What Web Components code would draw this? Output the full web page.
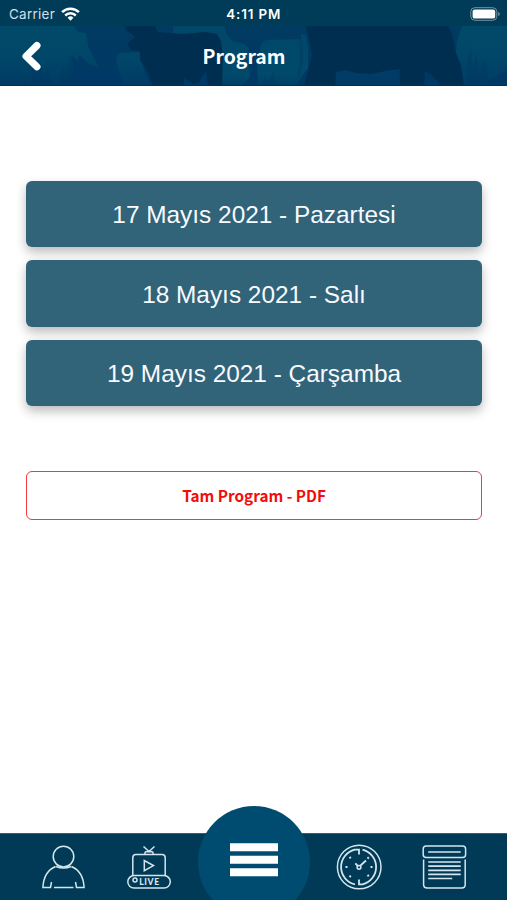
<!DOCTYPE html>
<html lang="tr">
<head>
<meta charset="UTF-8">
<meta name="viewport" content="width=device-width, initial-scale=1">
<title>Program</title>
<style>
  html, body { margin: 0; height: 100%; background: #fff; }
  body { overflow: hidden; font-family: "Liberation Sans", Arial, sans-serif; }
</style>
</head>
<body>
<program-app>
  <status-bar slot="top" carrier="Carrier" time="4:11 PM"></status-bar>
  <page-header slot="top">Program</page-header>
  <day-button>17 Mayıs 2021 - Pazartesi</day-button>
  <day-button>18 Mayıs 2021 - Salı</day-button>
  <day-button>19 Mayıs 2021 - Çarşamba</day-button>
  <pdf-button>Tam Program - PDF</pdf-button>
  <tab-bar slot="bottom"></tab-bar>
</program-app>

<script>
class ProgramApp extends HTMLElement {
    constructor() {
        super();
        this.attachShadow({ mode: 'open' });
    }

    connectedCallback() {
        this.shadowRoot.innerHTML = `
      <style>
        :host { display: flex; flex-direction: column; height: 100vh; }
        main {
          flex: 1; display: flex; flex-direction: column; gap: 13px;
          padding: 94.5px 25px 0 26px;
        }
      </style>
      <slot name="top"></slot>
      <main><slot></slot></main>
      <slot name="bottom"></slot>
    `;
    }
}
customElements.define('program-app', ProgramApp);

class StatusBar extends HTMLElement {
    constructor() {
        super();
        this.attachShadow({ mode: 'open' });
    }

    connectedCallback() {
        this.shadowRoot.innerHTML = `
      <style>
        :host {
          display: grid; grid-template-columns: 1fr auto 1fr; align-items: center;
          box-sizing: border-box; height: 26px; padding: 2px 6px 0 9px;
          background: #003b57; color: #fff;
          font: 13.4px/16px Inter, "Liberation Sans", sans-serif;
        }
        .left { display: flex; align-items: center; gap: 6px; color: #d3e0e7; letter-spacing: 0.3px; }
        .time { font-weight: 600; font-size: 13.4px; letter-spacing: 0.85px; margin-right: 2.6px; }
        .battery { justify-self: end; }
        svg { display: block; }
      </style>
      <div class="left">
        <span>${this.getAttribute('carrier')}</span>
        <svg width="19" height="14" viewBox="0 0 19 14" fill="none" stroke="#fff" stroke-width="2.5">
          <path d="M1.1 5.2a12 12 0 0 1 16.8 0M4.2 8.5a7.6 7.6 0 0 1 10.6 0"/>
          <path d="M9.5 13.7 6.6 10.8a4.1 4.1 0 0 1 5.8 0z" fill="#fff" stroke="none"/>
        </svg>
      </div>
      <span class="time">${this.getAttribute('time')}</span>
      <svg class="battery" width="31" height="14" viewBox="0 0 31 14">
        <rect x=".8" y=".7" width="26" height="12.6" rx="4" fill="none" stroke="#7794a4"/>
        <rect x="2.6" y="2.4" width="22.6" height="9.2" rx="2.2" fill="#fff"/>
        <path d="M28.2 5v4q1.6-.5 1.6-2t-1.6-2z" fill="#7794a4"/>
      </svg>
    `;
    }
}
customElements.define('status-bar', StatusBar);

class PageHeader extends HTMLElement {
    constructor() {
        super();
        this.attachShadow({ mode: 'open' });
    }

    connectedCallback() {
        this.shadowRoot.innerHTML = `
      <style>
        :host {
          display: grid; height: 60px; overflow: hidden;
          background: #003863; color: #fff;
        }
        .herd, .bar { grid-area: 1 / 1; }
        .herd { display: block; width: 100%; height: 60px; }
        .bar {
          display: grid; grid-template-columns: 64px 1fr 83px; align-items: center;
          z-index: 1;
        }
        .back { margin-left: 20px; display: block; }
        h1 {
          margin: 0; text-align: center;
          font: bold 19.4px/28px "Noto Sans CJK SC", sans-serif;
        }
      </style>
      <svg class="herd" viewBox="0 0 507 60" preserveAspectRatio="none">
        <defs>
          <linearGradient id="sky" x1="0" x2="0" y1="0" y2="1">
            <stop offset="0" stop-color="#003b61"/>
            <stop offset="1" stop-color="#003866"/>
          </linearGradient>
          <linearGradient id="teal" gradientUnits="userSpaceOnUse" x1="0" x2="0" y1="0" y2="60">
            <stop offset="0" stop-color="#004a69"/>
            <stop offset=".55" stop-color="#004668"/>
            <stop offset="1" stop-color="#003b65"/>
          </linearGradient>
          <linearGradient id="rump" gradientUnits="userSpaceOnUse" x1="0" x2="0" y1="0" y2="60">
            <stop offset="0" stop-color="#004768"/>
            <stop offset=".8" stop-color="#004a6b"/>
            <stop offset="1" stop-color="#003f66"/>
          </linearGradient>
        </defs>
        <rect width="507" height="60" fill="url(#sky)"/>
        <!-- cattle in the distance -->
        <g fill="url(#teal)">
          <path d="M0 0H74L78 6 86 7 88 20 94 32 99 42 88 37 79 29 78 35 71 29 74 46 66 60H0z"/>
          <path d="M116 33 119 27 139 26 142 36 145 48 151 60H124L119 46z"/>
          <path d="M462 0H507V44L490 55 479 60H462L455 35 457 15z"/>
          <path d="M336 48 345 44 360 47 385 45 397 43 400 60H336z" opacity=".5"/>
        </g>
        <g fill="url(#rump)">
          <path d="M173 0H224L227 9 233 15 244 18 249 22 248 36 250 52 240 60H222L213 16 173 7z"/>
          <path d="M258 60 257 40 261 18 266 14 301 13 301 8 306 9 308 22 308 42 302 50 296 60z"/>
        </g>
        <g fill="#003761" opacity=".4">
          <path d="M30 60 33 40 36 50 41 36 44 56 48 42 51 60zM59 60 62 38 66 50 70 31 76 45 72 60z"/>
          <path d="M263 60 265 49 269 57 273 45 276 60zM467 36 471 20 473 43 476 28 480 48 484 33 488 52 479 60H467z"/>
          <path d="M300 12h2l1 22-4 18-2-2 3-16z"/>
        </g>
        <!-- cattle up front -->
        <g fill="#002e50">
          <path d="M125 0H155L158 6 169 7 181 8 206 6 217 8 221 15 223 29 222 60H208L206 44 199 56 193 58 184 52 184 60H153L147 45 140 34 140 25 130 24 128 17 135 11 126 4z"/>
          <path d="M306 0H448L452 8 456 27 461 39 464 60H441L432 49 425 45 424 60H400V43L385 45 371 48 356 47 345 44 336 46 335 60H304L307 48 312 29 308 9z"/>
        </g>
        <rect y="59" width="507" height="1" fill="#082f50"/>
      </svg>
      <div class="bar">
        <svg class="back" width="23" height="32" viewBox="0 0 23 32">
          <path d="M16.9 5.6 6.1 16.2l10.8 10.6" fill="none" stroke="#fff" stroke-width="7.2" stroke-linecap="round" stroke-linejoin="round"/>
        </svg>
        <h1><slot></slot></h1>
      </div>
    `;
    }
}
customElements.define('page-header', PageHeader);

class DayButton extends HTMLElement {
    constructor() {
        super();
        this.attachShadow({ mode: 'open' });
    }

    connectedCallback() {
        this.shadowRoot.innerHTML = `
      <style>
        :host { display: block; height: 66.5px; }
        button {
          display: block; width: 100%; height: 100%; padding: 3px 0 0;
          border: 0; border-radius: 6px; background: #316379; color: #f7fbff;
          font: 24.4px/30px "Liberation Sans", Arial, sans-serif;
          box-shadow: 0 5px 11px rgba(0,0,0,0.27);
        }
      </style>
      <button><slot></slot></button>
    `;
    }
}
customElements.define('day-button', DayButton);

class PdfButton extends HTMLElement {
    constructor() {
        super();
        this.attachShadow({ mode: 'open' });
    }

    connectedCallback() {
        this.shadowRoot.innerHTML = `
      <style>
        :host { display: block; height: 49px; margin-top: 52px; }
        button {
          display: block; width: 100%; height: 100%; padding: 0 0 1px;
          border: 1.5px solid #f03b3b; border-radius: 6px;
          background: #fff; color: #f40b0b;
          font: bold 15.3px/22px "Noto Sans CJK SC", sans-serif;
        }
      </style>
      <button><slot></slot></button>
    `;
    }
}
customElements.define('pdf-button', PdfButton);

class TabBar extends HTMLElement {
    constructor() {
        super();
        this.attachShadow({ mode: 'open' });
    }

    connectedCallback() {
        this.shadowRoot.innerHTML = `
      <style>
        :host {
          display: grid; grid-template-columns: 85px 85px 1fr 84px 86px;
          box-sizing: border-box; height: 67px; padding: 0 20px 0 21px;
          background: #003a57; border-top: 1px solid #355f76;
        }
        .tab { display: grid; justify-items: center; padding-top: 9px; }
        svg { display: block; fill: none; stroke: #d3e6ed; stroke-width: 1.5; }
        .menu { position: relative; }
        /* round button rising over the bar's top edge */
        .disc {
          position: absolute; left: 50%; top: -28px; width: 112px; height: 94px;
          transform: translateX(-50%); overflow: hidden;
        }
        .disc svg { stroke: none; }
      </style>
      <div class="tab">
        <svg width="48" height="48" viewBox="0 0 48 48">
          <circle cx="23.5" cy="13.6" r="10.3"/>
          <path d="M15.5 23.5C8.5 26.5 3.5 33 2.9 44.5h7.6L11.5 39M31.5 23.5c7 3 12 9.5 12.6 21h-7.6L35.5 39M14 44.5h19.5M16 23.5q7.5 3.2 15 0"/>
        </svg>
      </div>
      <div class="tab">
        <svg width="48" height="48" viewBox="0 0 48 48">
          <path d="m18.5 3.5 5.5 5 5.5-5M20 11.5V9.7q0-1 1-1h6q1 0 1 1v1.8"/>
          <path d="M7.8 32.5V14.8q0-3.2 3.2-3.2h26q3.2 0 3.2 3.2v17.7"/>
          <path d="M19.3 17.5v10.2l9.2-5.1z"/>
          <rect x="2.8" y="32.5" width="42.5" height="12.6" rx="6.3"/>
          <circle cx="10" cy="37" r="2"/>
          <text x="14.2" y="42.4" fill="#d3e6ed" stroke="none" font-family="Lato, sans-serif" font-weight="900" font-size="8.6" textLength="20">LIVE</text>
        </svg>
      </div>
      <div class="menu">
        <div class="disc">
          <svg width="112" height="95" viewBox="0 0 112 95">
            <circle cx="56" cy="56" r="56" fill="#004c70"/>
            <path d="M32 37.2h48v8H32zM32 49.7h48v8H32zM32 62.2h48v8H32z" fill="#fff"/>
          </svg>
        </div>
      </div>
      <div class="tab">
        <svg width="48" height="48" viewBox="0 0 48 48">
          <circle cx="24.2" cy="24" r="21.8"/>
          <path d="M24 11.5V6.7h-4.2A17.8 17.8 0 0 0 20 41.4M27.5 6.7a17.8 17.8 0 0 1 0 34.6L24 41.3v-4.8" stroke-width="1.8"/>
          <path d="m20.3 20.3 3 3M25.1 22.9 31 17.5" stroke-width="1.9"/>
          <circle cx="24" cy="24.3" r="1.9"/>
          <path d="M10.5 24h2M35.5 24h2M14.5 14l1.3 1.3M32.5 32l1.3 1.3M14.5 34l1.3-1.3M32.5 15.6l1.3-1.3" stroke-width="2"/>
        </svg>
      </div>
      <div class="tab">
        <svg width="48" height="48" viewBox="0 0 48 48">
          <rect x="3.2" y="3" width="42.4" height="11.6" rx="3"/>
          <path d="M3.6 16.5v25q0 3.5 3.5 3.5h34.6q3.5 0 3.5-3.5v-25"/>
          <path d="M8.2 9h32.5M8.2 19h32.5M8.2 23.2h32.5M8.2 27.3h32.5M8.2 31.4h32.5M8.2 35.5h24" stroke-width="1.7"/>
        </svg>
      </div>
    `;
    }
}
customElements.define('tab-bar', TabBar);
</script>
</body>
</html>
